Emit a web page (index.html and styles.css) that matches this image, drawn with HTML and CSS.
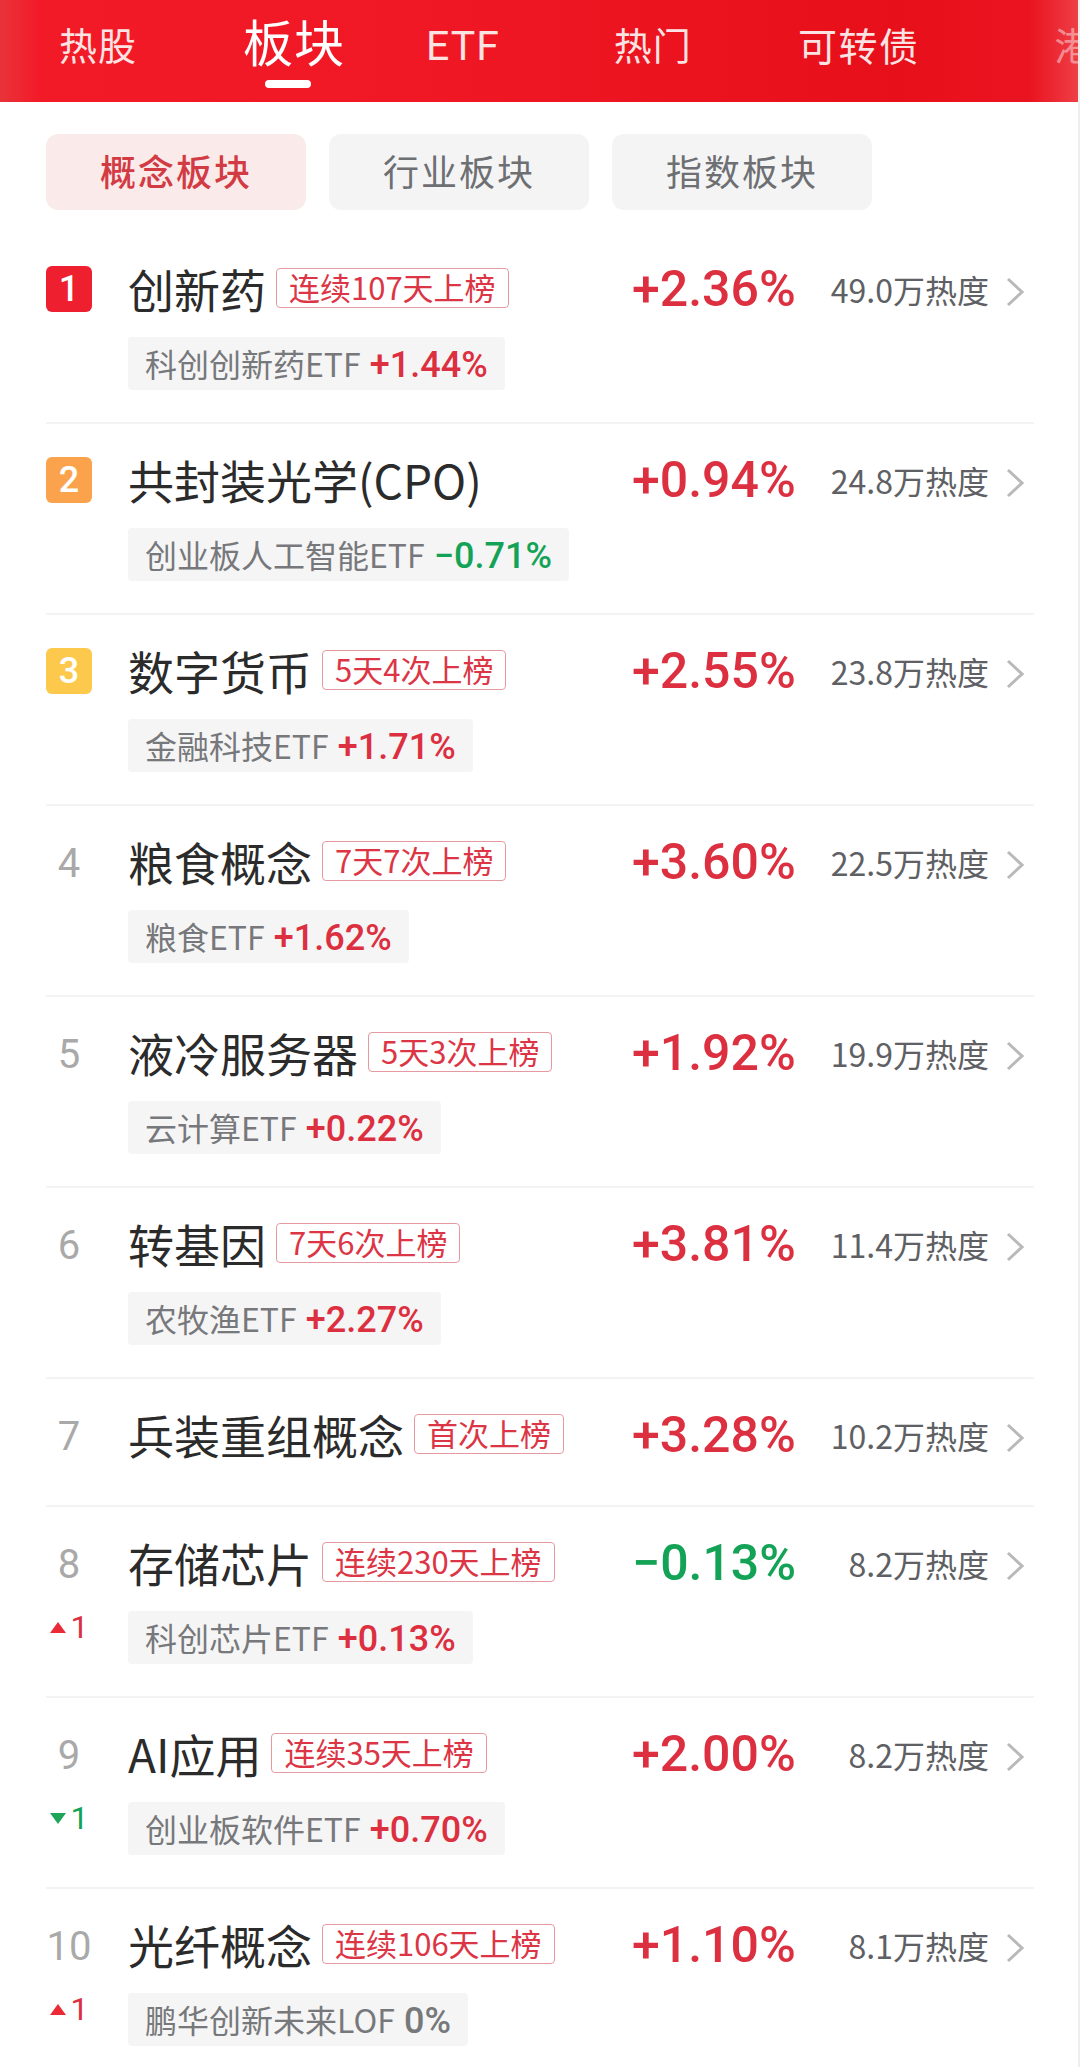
FILE: index.html
```html
<!DOCTYPE html>
<html lang="zh-CN">
<head>
    <meta charset="UTF-8">
    <meta name="viewport" content="width=device-width, initial-scale=1.0">
    <title>板块</title>
    <link rel="stylesheet" href="styles.css">
</head>
<body>

<header class="tabs">
    <span class="tab tab-hot">热股</span>
    <span class="tab tab-active">板块</span>
    <span class="tab tab-etf">ETF</span>
    <span class="tab tab-men">热门</span>
    <span class="tab tab-bond">可转债</span>
    <span class="tab tab-hk">港</span>
</header>

<nav class="segments">
    <span class="segment segment-active">概念板块</span>
    <span class="segment">行业板块</span>
    <span class="segment">指数板块</span>
</nav>

<section class="list">
    <div class="row">
        <div class="rank"><span class="badge badge-1">1</span></div>
        <div class="main">
            <div class="title-line"><span class="name">创新药</span><span class="tag">连续107天上榜</span></div>
            <div class="chip">科创创新药ETF <b class="up">+1.44%</b></div>
        </div>
        <div class="pct up">+2.36%</div>
        <div class="heat">49.0万热度</div>
        <svg class="chevron" viewBox="0 0 18 30"><path d="M2 2 L16 15 L2 28"/></svg>
    </div>

    <div class="row">
        <div class="rank"><span class="badge badge-2">2</span></div>
        <div class="main">
            <div class="title-line"><span class="name">共封装光学(CPO)</span></div>
            <div class="chip">创业板人工智能ETF <b class="down">−0.71%</b></div>
        </div>
        <div class="pct up">+0.94%</div>
        <div class="heat">24.8万热度</div>
        <svg class="chevron" viewBox="0 0 18 30"><path d="M2 2 L16 15 L2 28"/></svg>
    </div>

    <div class="row">
        <div class="rank"><span class="badge badge-3">3</span></div>
        <div class="main">
            <div class="title-line"><span class="name">数字货币</span><span class="tag">5天4次上榜</span></div>
            <div class="chip">金融科技ETF <b class="up">+1.71%</b></div>
        </div>
        <div class="pct up">+2.55%</div>
        <div class="heat">23.8万热度</div>
        <svg class="chevron" viewBox="0 0 18 30"><path d="M2 2 L16 15 L2 28"/></svg>
    </div>

    <div class="row">
        <div class="rank"><span class="num">4</span></div>
        <div class="main">
            <div class="title-line"><span class="name">粮食概念</span><span class="tag">7天7次上榜</span></div>
            <div class="chip">粮食ETF <b class="up">+1.62%</b></div>
        </div>
        <div class="pct up">+3.60%</div>
        <div class="heat">22.5万热度</div>
        <svg class="chevron" viewBox="0 0 18 30"><path d="M2 2 L16 15 L2 28"/></svg>
    </div>

    <div class="row">
        <div class="rank"><span class="num">5</span></div>
        <div class="main">
            <div class="title-line"><span class="name">液冷服务器</span><span class="tag">5天3次上榜</span></div>
            <div class="chip">云计算ETF <b class="up">+0.22%</b></div>
        </div>
        <div class="pct up">+1.92%</div>
        <div class="heat">19.9万热度</div>
        <svg class="chevron" viewBox="0 0 18 30"><path d="M2 2 L16 15 L2 28"/></svg>
    </div>

    <div class="row">
        <div class="rank"><span class="num">6</span></div>
        <div class="main">
            <div class="title-line"><span class="name">转基因</span><span class="tag">7天6次上榜</span></div>
            <div class="chip">农牧渔ETF <b class="up">+2.27%</b></div>
        </div>
        <div class="pct up">+3.81%</div>
        <div class="heat">11.4万热度</div>
        <svg class="chevron" viewBox="0 0 18 30"><path d="M2 2 L16 15 L2 28"/></svg>
    </div>

    <div class="row row-short">
        <div class="rank"><span class="num">7</span></div>
        <div class="main">
            <div class="title-line"><span class="name">兵装重组概念</span><span class="tag">首次上榜</span></div>
        </div>
        <div class="pct up">+3.28%</div>
        <div class="heat">10.2万热度</div>
        <svg class="chevron" viewBox="0 0 18 30"><path d="M2 2 L16 15 L2 28"/></svg>
    </div>

    <div class="row">
        <div class="rank"><span class="num">8</span><span class="move up"><i class="tri tri-up"></i>1</span></div>
        <div class="main">
            <div class="title-line"><span class="name">存储芯片</span><span class="tag">连续230天上榜</span></div>
            <div class="chip">科创芯片ETF <b class="up">+0.13%</b></div>
        </div>
        <div class="pct down">−0.13%</div>
        <div class="heat">8.2万热度</div>
        <svg class="chevron" viewBox="0 0 18 30"><path d="M2 2 L16 15 L2 28"/></svg>
    </div>

    <div class="row">
        <div class="rank"><span class="num">9</span><span class="move down"><i class="tri tri-down"></i>1</span></div>
        <div class="main">
            <div class="title-line"><span class="name">AI应用</span><span class="tag">连续35天上榜</span></div>
            <div class="chip">创业板软件ETF <b class="up">+0.70%</b></div>
        </div>
        <div class="pct up">+2.00%</div>
        <div class="heat">8.2万热度</div>
        <svg class="chevron" viewBox="0 0 18 30"><path d="M2 2 L16 15 L2 28"/></svg>
    </div>

    <div class="row">
        <div class="rank"><span class="num">10</span><span class="move up"><i class="tri tri-up"></i>1</span></div>
        <div class="main">
            <div class="title-line"><span class="name">光纤概念</span><span class="tag">连续106天上榜</span></div>
            <div class="chip">鹏华创新未来LOF <b class="flat">0%</b></div>
        </div>
        <div class="pct up">+1.10%</div>
        <div class="heat">8.1万热度</div>
        <svg class="chevron" viewBox="0 0 18 30"><path d="M2 2 L16 15 L2 28"/></svg>
    </div>
</section>

</body>
</html>
```

FILE: styles.css
```css
html, body {
    margin: 0;
    padding: 0;
    background-color: #fff;
}

body {
    width: 1080px;
    height: 2067px;
    overflow: hidden;
    font-family: "Liberation Sans", "Noto Sans CJK SC", sans-serif;
    color: #2b2b2b;
    border-right: 2px solid #eee;
    box-sizing: border-box;
}

.tabs {
    height: 102px;
    display: flex;
    align-items: flex-start;
    padding-left: 59px;
    overflow: hidden;
    color: #fbe3e3;
    font-family: "Noto Sans CJK SC", sans-serif;
    font-size: 38px;
    white-space: nowrap;
    background: linear-gradient(90deg, #e8333a 0, #f31a28 40px, #f01824 400px, #e70f1a 900px, #ea1420 1030px, #ee4048 1080px);
}

.tab {
    padding-top: 16px;
    line-height: 56px;
    letter-spacing: 1px;
}

.tab-active {
    position: relative;
    margin-left: 106px;
    padding-top: 7px;
    line-height: 66px;
    font-size: 50px;
    color: #fff;
}

.tab-active::after {
    content: "";
    position: absolute;
    left: 22px;
    top: 80px;
    width: 46px;
    height: 8px;
    border-radius: 4px;
    background-color: #fff;
}

.tab-etf {
    margin-left: 81px;
    padding-top: 18px;
    font-family: "Roboto", sans-serif;
    font-size: 41px;
}

.tab-men {
    margin-left: 114px;
}

.tab-bond {
    margin-left: 106px;
    font-size: 39px;
    letter-spacing: 1.5px;
}

.tab-hk {
    margin-left: 135px;
    opacity: 0.5;
}

.segments {
    display: flex;
    gap: 23px;
    padding: 32px 0 0 46px;
}

.segment {
    width: 260px;
    height: 76px;
    line-height: 72px;
    text-align: center;
    font-family: "Noto Sans CJK SC", sans-serif;
    font-size: 36px;
    letter-spacing: 2px;
    color: #6d6f72;
    background-color: #f4f4f5;
    border-radius: 12px;
}

.segment-active {
    color: #d23a44;
    font-weight: 500;
    background-color: #fbeaea;
}

.list {
    margin: 23px 44px 0 46px;
}

.row {
    height: 191px;
    box-sizing: border-box;
    display: flex;
    align-items: flex-start;
    border-bottom: 2px solid #f3f3f3;
}

.row-short {
    height: 128px;
}

.rank {
    width: 46px;
    margin-right: 36px;
    flex-shrink: 0;
    display: flex;
    flex-direction: column;
    align-items: center;
    padding-top: 33px;
}

.badge {
    width: 46px;
    height: 46px;
    line-height: 46px;
    border-radius: 6px;
    text-align: center;
    color: #fff;
    font-family: "Roboto", sans-serif;
    font-size: 36px;
    font-weight: 500;
}

.badge-1 {
    background-color: #ee2030;
}

.badge-2 {
    background-color: #fba34c;
}

.badge-3 {
    background-color: #fdc94c;
}

.num {
    margin-top: 2px;
    line-height: 46px;
    font-family: "Roboto", sans-serif;
    font-size: 40px;
    color: #a9a9a9;
}

.move {
    display: flex;
    align-items: center;
    margin-top: 22px;
    font-family: "Roboto", sans-serif;
    font-size: 32px;
    line-height: 34px;
}

.tri {
    width: 0;
    height: 0;
    margin-right: 5px;
    border-left: 8px solid transparent;
    border-right: 8px solid transparent;
}

.tri-up {
    border-bottom: 11px solid #ea2a35;
}

.tri-down {
    border-top: 11px solid #1fa55a;
}

.main {
    flex: 1;
    min-width: 0;
}

.title-line {
    display: flex;
    align-items: center;
    height: 50px;
    margin-top: 30px;
}

.name {
    font-family: "Noto Sans CJK SC", sans-serif;
    font-size: 46px;
    line-height: 50px;
    white-space: nowrap;
}

.tag {
    margin-left: 10px;
    padding: 0 12px;
    height: 40px;
    line-height: 36px;
    box-sizing: border-box;
    border: 1px solid #e59aa2;
    border-radius: 4px;
    color: #dc3545;
    font-family: "Noto Sans CJK SC", sans-serif;
    font-size: 31px;
    white-space: nowrap;
}

.chip {
    display: inline-block;
    height: 53px;
    line-height: 52px;
    margin-top: 24px;
    padding: 0 17px;
    border-radius: 4px;
    background-color: #f5f5f5;
    color: #77787b;
    font-family: "Noto Sans CJK SC", sans-serif;
    font-size: 32px;
    white-space: nowrap;
}

.chip b {
    margin-left: 2px;
    font-family: "Roboto", sans-serif;
    font-size: 36px;
    font-weight: 500;
}

.up {
    color: #dc2f40;
}

.down {
    color: #14a356;
}

.chip .up {
    color: #dc2f40;
}

.chip .flat {
    color: #77787b;
}

.pct {
    width: 174px;
    flex-shrink: 0;
    margin-top: 29px;
    font-family: "Roboto", sans-serif;
    font-size: 50px;
    font-weight: 500;
    line-height: 54px;
}

.heat {
    width: 183px;
    flex-shrink: 0;
    margin-top: 34px;
    text-align: right;
    font-family: "Noto Sans CJK SC", sans-serif;
    font-size: 32px;
    line-height: 44px;
    color: #5e6064;
    white-space: nowrap;
}

.chevron {
    width: 18px;
    height: 30px;
    margin: 44px 10px 0 17px;
    flex-shrink: 0;
}

.chevron path {
    fill: none;
    stroke: #b9b9b9;
    stroke-width: 3;
}
```
